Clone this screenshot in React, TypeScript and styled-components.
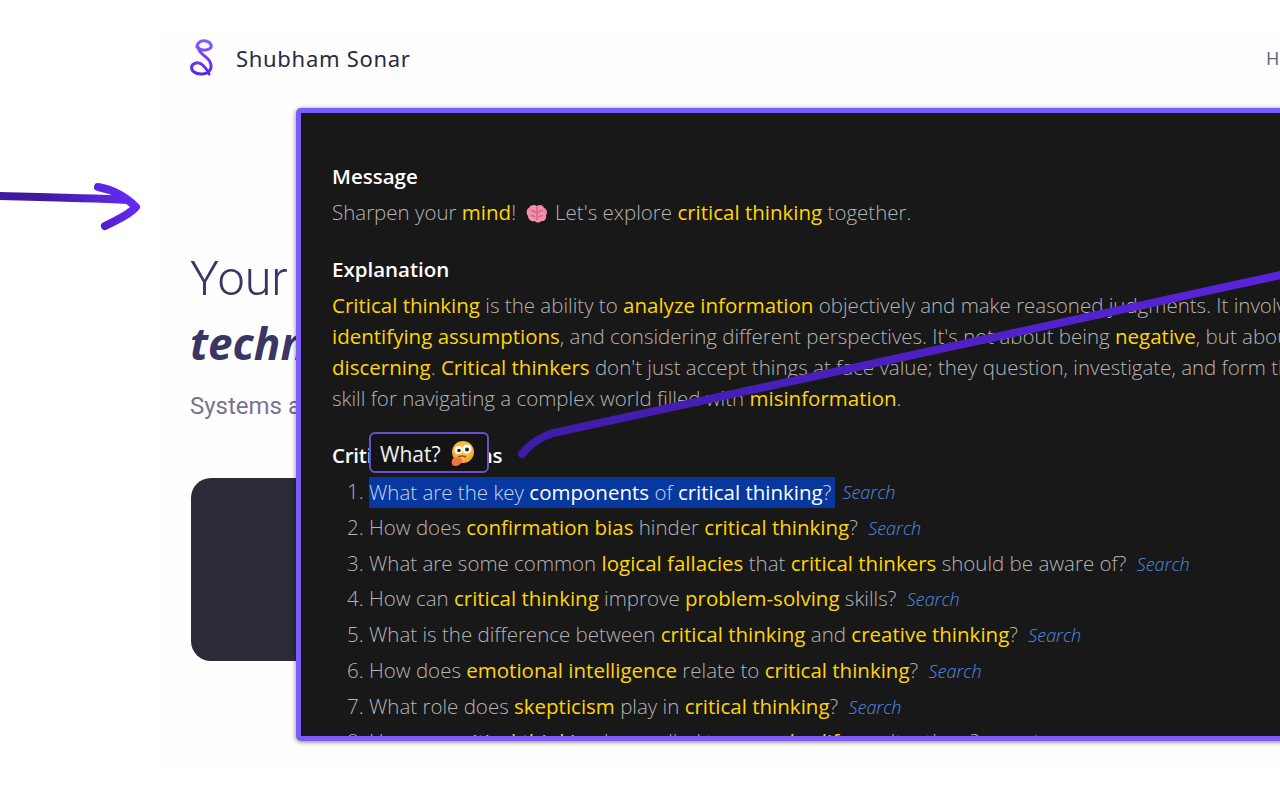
import React from "react";
import styled, { createGlobalStyle } from "styled-components";

const Global = createGlobalStyle`
  html, body { margin: 0; padding: 0; width: 1280px; height: 800px; overflow: hidden; background: #fff; }
  #root { width: 1280px; height: 800px; overflow: hidden; }
`;

const Stage = styled.div`
  position: relative;
  width: 1280px;
  height: 800px;
  overflow: hidden;
  background: #fff;
  padding: 30px 0 0 160px;
  box-sizing: border-box;
`;

const Site = styled.div`
  width: 1120px;
  height: 740px;
  background: #fefefe;
  padding: 0 0 0 30px;
  box-sizing: border-box;
  font-family: "Roboto", sans-serif;
`;

const Header = styled.header`
  display: flex;
  align-items: center;
  height: 56px;
  justify-content: space-between;
`;

const Brand = styled.div`
  display: flex;
  align-items: center;
  gap: 22px;
  font-family: "Noto Sans", sans-serif;
  font-size: 22px;
  line-height: 56px;
  letter-spacing: 0.7px;
  color: #2b2944;
`;

const NavItem = styled.span`
  font-family: "Noto Sans", sans-serif;
  font-size: 18px;
  color: #5c6b80;
  margin-right: -14px;
  width: 28px;
`;

const Hero = styled.div`
  padding-top: 163px;
`;

const HeroTitle = styled.div`
  font-size: 48.5px;
  line-height: 60px;
  font-weight: 300;
  color: #3a3564;
  margin-bottom: 1px;
`;

const HeroEm = styled.div`
  font-family: "Open Sans", sans-serif;
  font-size: 44px;
  line-height: 66px;
  font-weight: 700;
  font-style: italic;
  color: #3a3564;
`;

const HeroSub = styled.div`
  font-size: 24px;
  line-height: 36px;
  margin-top: 12px;
  color: #77748f;
`;

const HeroCard = styled.div`
  width: 400px;
  height: 183px;
  margin: 54px 0 0 1px;
  border-radius: 20px;
  background: #2c2b39;
`;

const Panel = styled.section`
  position: absolute;
  left: 296px;
  top: 108px;
  width: 1100px;
  height: 633px;
  box-sizing: border-box;
  border: 5px solid #7c5cf6;
  border-radius: 5px;
  background: #181818;
  box-shadow: 0 1px 5px rgba(0, 0, 0, 0.5);
  overflow: hidden;
  padding: 48px 0 0 31px;
  font-family: "Open Sans", sans-serif;
  font-size: 20.5px;
  font-weight: 300;
  color: #b4b4b4;
  white-space: nowrap;
`;

const Heading = styled.h3<{ $tight?: boolean }>`
  margin: 0;
  font-size: 20.5px;
  font-weight: 600;
  line-height: 31px;
  letter-spacing: ${(p) => (p.$tight ? "-0.25px" : "0")};
  color: #fff;
`;

const Para = styled.p`
  margin: 5px 0 26px;
  line-height: 31px;
`;

const Line = styled.span`
  display: block;
`;

const Key = styled.span`
  color: #ffd500;
  font-weight: 400;
`;

const Questions = styled.ol`
  margin: 3px 0 0;
  padding: 0 0 0 37px;
`;

const Question = styled.li`
  height: 35.75px;
  line-height: 35.75px;
  &::marker { color: #b4b4b4; }
`;

const Selected = styled.span`
  background: #07389f;
  color: #c6d3ee;
  padding: 0.5px 4px 2.5px 0;
  ${Key} { color: #fff; }
`;

const SearchLink = styled.a<{ $gap: number }>`
  margin-left: ${(p) => p.$gap}px;
  font-size: 18px;
  font-style: italic;
  color: #4f8ce4;
`;

const Tooltip = styled.div`
  position: absolute;
  left: 369px;
  top: 432px;
  width: 120px;
  height: 41px;
  box-sizing: border-box;
  display: flex;
  align-items: center;
  gap: 8px;
  padding: 2px 0 0 9px;
  border: 2px solid #6b4fcf;
  border-radius: 6px;
  background: #141416;
  font-family: "Open Sans", sans-serif;
  font-size: 21px;
  color: #eee;
`;

const Overlay = styled.svg`
  position: absolute;
  left: 0;
  top: 0;
  pointer-events: none;
`;

const EmojiBrain = styled.svg`
  display: inline-block;
  vertical-align: -4px;
  margin: 0 7px 0 10px;
`;

const S = (t: string) => <Key>{t}</Key>;

const items: React.ReactNode[] = [
  <>How does {S("confirmation bias")} hinder {S("critical thinking")}?</>,
  <>What are some common {S("logical fallacies")} that {S("critical thinkers")} should be aware of?</>,
  <>How can {S("critical thinking")} improve {S("problem-solving")} skills?</>,
  <>What is the difference between {S("critical thinking")} and {S("creative thinking")}?</>,
  <>How does {S("emotional intelligence")} relate to {S("critical thinking")}?</>,
  <>What role does {S("skepticism")} play in {S("critical thinking")}?</>,
  <>How can {S("critical thinking")} be applied to {S("everyday life")} or situations?</>,
];

export default function App() {
  return (
    <Stage>
      <Global />
      <Site>
        <Header>
          <Brand>
            <svg width="24" height="38" viewBox="0 0 24 38" fill="none">
              <defs>
                <linearGradient id="lg" x1="0" y1="0" x2="0" y2="1">
                  <stop offset="0" stopColor="#8a5cff" />
                  <stop offset="1" stopColor="#5a25ea" />
                </linearGradient>
              </defs>
              <path
                d="M7 8 C7 3 12 1 16 2 C21 3 23 8 19 10 C15 12 9 11 8 8 C8 13 14 16 18 20 C21 23 22 28 20 31 C17 36 8 36 4 33 C0 30 1 25 6 24 C11 23 16 28 19 35"
                stroke="url(#lg)"
                strokeWidth="3"
                strokeLinecap="round"
                strokeLinejoin="round"
              />
            </svg>
            Shubham Sonar
          </Brand>
          <NavItem>H</NavItem>
        </Header>
        <Hero>
          <HeroTitle>Your</HeroTitle>
          <HeroEm>techn</HeroEm>
          <HeroSub>Systems a</HeroSub>
          <HeroCard />
        </Hero>
      </Site>

      <Panel>
        <Heading>Message</Heading>
        <Para>
          Sharpen your {S("mind")}!
          <EmojiBrain width="22" height="20" viewBox="0 0 22 20">
            <path d="M11 2 C8 0 4 1 3 4 C0 5 0 10 2 12 C2 16 6 18 9 17 C10 19 14 19 15 17 C18 18 21 15 20 11 C22 9 21 5 18 4 C17 1 14 0 11 2Z" fill="#f08fa8" />
            <path d="M11 3 V16 M5 7 C7 6 9 7 9 9 M5 12 C7 11 8 12 9 13 M17 7 C15 6 13 7 13 9 M17 12 C15 11 14 12 13 13" stroke="#c75f80" strokeWidth="1.3" fill="none" />
          </EmojiBrain>
          Let's explore {S("critical thinking")} together.
        </Para>
        <Heading>Explanation</Heading>
        <Para>
          <Line>{S("Critical thinking")} is the ability to {S("analyze information")} objectively and make reasoned judgments. It involves</Line>
          <Line>{S("identifying assumptions")}, and considering different perspectives. It's not about being {S("negative")}, but about being</Line>
          <Line>{S("discerning")}. {S("Critical thinkers")} don't just accept things at face value; they question, investigate, and form their own</Line>
          <Line>skill for navigating a complex world filled with {S("misinformation")}.</Line>
        </Para>
        <Heading $tight>Critical Questions</Heading>
        <Questions>
          <Question>
            <Selected>What are the key {S("components")} of {S("critical thinking")}?</Selected>
            <SearchLink $gap={7}>Search</SearchLink>
          </Question>
          {items.map((node, i) => (
            <Question key={i}>
              {node} <SearchLink $gap={5}>Search</SearchLink>
            </Question>
          ))}
        </Questions>
      </Panel>

      <Tooltip>
        What?
        <svg width="26" height="26" viewBox="0 0 26 26">
          <defs>
            <radialGradient id="face" cx="0.5" cy="0.4" r="0.65">
              <stop offset="0" stopColor="#fcd34d" />
              <stop offset="1" stopColor="#f59b2e" />
            </radialGradient>
          </defs>
          <circle cx="14" cy="11" r="11" fill="url(#face)" />
          <circle cx="9.5" cy="9" r="4" fill="#fff" />
          <circle cx="18" cy="8" r="4.5" fill="#fff" />
          <circle cx="10" cy="9.5" r="1.8" fill="#222" />
          <circle cx="18" cy="8.5" r="2" fill="#222" />
          <path d="M9 16 Q13 14 17 16" stroke="#a34a1d" strokeWidth="1.6" fill="none" />
          <path d="M3 19 C5 15 12 16 13 19 C13 23 9 25 6 25 C3 25 2 22 3 19Z" fill="#f2743d" />
        </svg>
      </Tooltip>

      <Overlay width="1280" height="800" viewBox="0 0 1280 800" fill="none">
        <defs>
          <linearGradient id="arrow" gradientUnits="userSpaceOnUse" x1="120" y1="185" x2="60" y2="225">
            <stop offset="0" stopColor="#6429f5" />
            <stop offset="1" stopColor="#3f1a9e" />
          </linearGradient>
          <linearGradient id="long" gradientUnits="userSpaceOnUse" x1="1280" y1="275" x2="522" y2="453">
            <stop offset="0" stopColor="#5a24dc" />
            <stop offset="1" stopColor="#3f1ca6" />
          </linearGradient>
        </defs>
        <path d="M-4 196 C40 197 90 198 128 200" stroke="url(#arrow)" strokeWidth="8" />
        <path d="M98 187 C115 190 128 199 136 207 C128 216 116 220 105 226" stroke="url(#arrow)" strokeWidth="8" strokeLinecap="round" strokeLinejoin="round" />
        <path d="M1290 273 L553 433 C540 437 530 444 522 454" stroke="url(#long)" strokeWidth="8" strokeLinecap="round" />
      </Overlay>
    </Stage>
  );
}
